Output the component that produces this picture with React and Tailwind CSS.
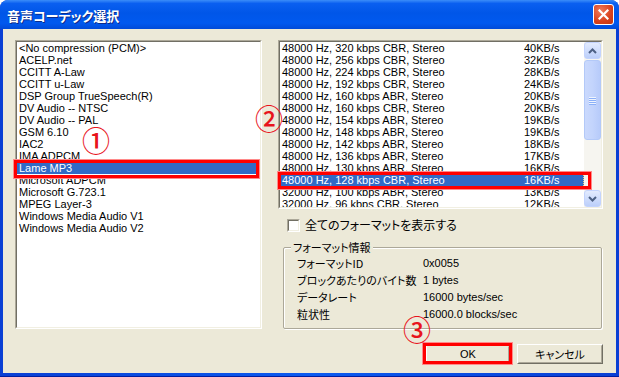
import React from "react";

const leftItems = [
  "<No compression (PCM)>",
  "ACELP.net",
  "CCITT A-Law",
  "CCITT u-Law",
  "DSP Group TrueSpeech(R)",
  "DV Audio -- NTSC",
  "DV Audio -- PAL",
  "GSM 6.10",
  "IAC2",
  "IMA ADPCM",
  "Lame MP3",
  "Microsoft ADPCM",
  "Microsoft G.723.1",
  "MPEG Layer-3",
  "Windows Media Audio V1",
  "Windows Media Audio V2",
];

const rightItems = [
  ["48000 Hz, 320 kbps CBR, Stereo", "40KB/s"],
  ["48000 Hz, 256 kbps CBR, Stereo", "32KB/s"],
  ["48000 Hz, 224 kbps CBR, Stereo", "28KB/s"],
  ["48000 Hz, 192 kbps CBR, Stereo", "24KB/s"],
  ["48000 Hz, 160 kbps ABR, Stereo", "20KB/s"],
  ["48000 Hz, 160 kbps CBR, Stereo", "20KB/s"],
  ["48000 Hz, 154 kbps ABR, Stereo", "19KB/s"],
  ["48000 Hz, 148 kbps ABR, Stereo", "19KB/s"],
  ["48000 Hz, 142 kbps ABR, Stereo", "18KB/s"],
  ["48000 Hz, 136 kbps ABR, Stereo", "17KB/s"],
  ["48000 Hz, 130 kbps ABR, Stereo", "16KB/s"],
  ["48000 Hz, 128 kbps CBR, Stereo", "16KB/s"],
  ["32000 Hz, 100 kbps ABR, Stereo", "13KB/s"],
  ["32000 Hz, 96 kbps CBR, Stereo", "12KB/s"],
];

const info = [
  ["フォーマットID", "0x0055"],
  ["ブロックあたりのバイト数", "1 bytes"],
  ["データレート", "16000 bytes/sec"],
  ["粒状性", "16000.0 blocks/sec"],
];

const JP = "font-['Noto_Sans_CJK_JP',sans-serif] [font-feature-settings:'palt'] text-[11px]";
const LAT = "font-['Liberation_Sans','Noto_Sans_CJK_JP',sans-serif] text-[11px]";

function Sunken({ className = "", children }) {
  return (
    <div className={"border border-t-[#aca899] border-l-[#aca899] border-b-white border-r-white " + className}>
      <div className="h-full w-full border border-t-[#716f64] border-l-[#716f64] border-b-[#f1efe2] border-r-[#f1efe2] bg-white overflow-hidden">
        {children}
      </div>
    </div>
  );
}

function ScrollBtn({ up }) {
  return (
    <div className="w-[17px] h-[17px] rounded-[3px] border border-[#c3d3fd] bg-gradient-to-b from-[#e3ebfe] to-[#bccffa] flex items-center justify-center">
      <svg width="9" height="6" viewBox="0 0 9 6">
        {up ? (
          <path d="M1 5 L4.5 1.5 L8 5" fill="none" stroke="#4d6185" strokeWidth="2" />
        ) : (
          <path d="M1 1 L4.5 4.5 L8 1" fill="none" stroke="#4d6185" strokeWidth="2" />
        )}
      </svg>
    </div>
  );
}

function Button({ children, isDefault }) {
  const inner = (
    <div className="h-full w-full border border-t-white border-l-white border-b-[#716f64] border-r-[#716f64]">
      <div className="h-full w-full border border-t-[#ece9d8] border-l-[#ece9d8] border-b-[#aca899] border-r-[#aca899] flex items-center justify-center bg-[#ece9d8]">
        {children}
      </div>
    </div>
  );
  return (
    <div className={"w-[86px] h-[20px] " + (isDefault ? "border border-black" : "")}>{inner}</div>
  );
}

export default function App() {
  return (
    <div className="w-[619px] h-[377px] bg-white overflow-hidden">
      <div className="w-full h-full flex flex-col rounded-t-[8px] bg-gradient-to-r from-[#0a3fd4] via-[#0b5bf0] to-[#0a3fd4] shadow-[inset_0_-1px_0_#001ea0]">
        {/* title bar */}
        <div className="h-[29px] shrink-0 flex items-center justify-between pl-[7px] pr-[5px] rounded-t-[8px] bg-[linear-gradient(to_bottom,#3b8df9_0%,#0a5ff0_12%,#0056e8_45%,#0059ef_80%,#004ad8_100%)]">
          <span className={"text-white font-bold text-[13px] font-['Noto_Sans_CJK_JP',sans-serif] [font-feature-settings:'palt'] [text-shadow:1px_1px_0_#0d2b8a] leading-none mt-[1px]"}>
            音声コーデック選択
          </span>
          <div className="w-[21px] h-[21px] rounded-[3px] border border-white bg-[radial-gradient(circle_at_35%_30%,#f07a5a,#d8401c_60%,#c2360f)] flex items-center justify-center">
            <svg width="11" height="11" viewBox="0 0 11 11">
              <path d="M1.5 1.5 L9.5 9.5 M9.5 1.5 L1.5 9.5" stroke="white" strokeWidth="2.2" strokeLinecap="square" />
            </svg>
          </div>
        </div>

        {/* client */}
        <div className="relative flex-1 mx-[3px] mb-[4px] bg-[#ece9d8] pl-[12px] pt-[11px] flex gap-[16px] text-black">
          {/* left list */}
          <Sunken className="w-[247px] h-[289px] shrink-0">
            <div className={LAT}>
              {leftItems.map((t, i) => (
                <div
                  key={i}
                  className={
                    "h-[12px] leading-[12px] pl-[2px] whitespace-nowrap " +
                    (i === 10 ? "bg-[#316ac5] text-white" : "")
                  }
                >
                  {t}
                </div>
              ))}
            </div>
          </Sunken>

          {/* right column */}
          <div className="w-[325px] flex flex-col">
            <Sunken className="h-[169px]">
              <div className="flex h-full">
                <div className={"flex-1 overflow-hidden " + LAT}>
                  {rightItems.map(([a, b], i) => (
                    <div
                      key={i}
                      className={
                        "h-[12px] leading-[12px] pl-[2px] flex whitespace-nowrap " +
                        (i === 11 ? "bg-[#316ac5] text-white border-r border-dotted border-r-[#f5d27a]" : "")
                      }
                    >
                      <span className="w-[242px] shrink-0">{a}</span>
                      <span>{b}</span>
                    </div>
                  ))}
                </div>
                <div className="w-[17px] flex flex-col bg-[#f6f5f0]">
                  <ScrollBtn up />
                  <div className="flex-1 relative pt-[1px]">
                    <div className="h-[80px] w-[17px] rounded-[3px] border border-[#b3c9f8] bg-gradient-to-r from-[#cad9fd] via-[#c3d4fc] to-[#b7cbfa] flex flex-col items-center justify-center gap-[1px]">
                      <div className="w-[7px] h-[1px] bg-[#eef4fe] shadow-[0_1px_0_#8cb0f8]" />
                      <div className="w-[7px] h-[1px] bg-[#eef4fe] shadow-[0_1px_0_#8cb0f8]" />
                      <div className="w-[7px] h-[1px] bg-[#eef4fe] shadow-[0_1px_0_#8cb0f8]" />
                      <div className="w-[7px] h-[1px] bg-[#eef4fe] shadow-[0_1px_0_#8cb0f8]" />
                    </div>
                  </div>
                  <ScrollBtn />
                </div>
              </div>
            </Sunken>

            {/* checkbox */}
            <div className="mt-[9px] h-[14px] flex items-center pl-[9px] gap-[5px]">
              <Sunken className="w-[13px] h-[13px] shrink-0" />
              <span className={JP + " leading-none text-[12px]"}>全てのフォーマットを表示する</span>
            </div>

            {/* group box */}
            <div className="mt-[15px] ml-[5px] w-[319px] h-[82px] relative border border-[#aca899] rounded-[2px] shadow-[inset_1px_1px_0_#fff,1px_1px_0_#fff] pt-[7px] pl-[13px]">
              <span className={"absolute -top-[8px] left-[7px] px-[2px] bg-[#ece9d8] leading-[14px] " + JP}>
                フォーマット情報
              </span>
              {info.map(([k, v], i) => (
                <div key={i} className="h-[17px] flex items-center whitespace-nowrap">
                  <span className={"w-[126px] shrink-0 leading-none " + JP}>{k}</span>
                  <span className={"leading-none " + LAT}>{v}</span>
                </div>
              ))}
            </div>

            {/* buttons */}
            <div className="mt-[15px] flex justify-end gap-[6px]">
              <Button isDefault>
                <span className={LAT}>OK</span>
              </Button>
              <Button>
                <span className={JP + " leading-none"}>キャンセル</span>
              </Button>
            </div>
          </div>

          {/* annotations */}
          <div className="absolute left-[11px] top-[131px] w-[245px] h-[18px] border-[3px] border-[#ff0000] outline outline-1 outline-[#ff8a8a]" />
          <div className="absolute left-[275px] top-[143px] w-[313px] h-[17px] border-[3px] border-[#ff0000] outline outline-1 outline-[#ff8a8a]" />
          <div className="absolute left-[420px] top-[314px] w-[89px] h-[21px] border-[3px] border-[#ff0000] outline outline-1 outline-[#ff8a8a]" />

          <span className="absolute left-[79px] top-[97px] text-[28px] leading-none font-medium text-[#e8141c] font-['Noto_Sans_CJK_JP',sans-serif]">①</span>
          <span className="absolute left-[252px] top-[75px] text-[28px] leading-none font-medium text-[#e8141c] font-['Noto_Sans_CJK_JP',sans-serif]">②</span>
          <span className="absolute left-[400px] top-[286px] text-[28px] leading-none font-medium text-[#e8141c] font-['Noto_Sans_CJK_JP',sans-serif]">③</span>
        </div>
      </div>
    </div>
  );
}
